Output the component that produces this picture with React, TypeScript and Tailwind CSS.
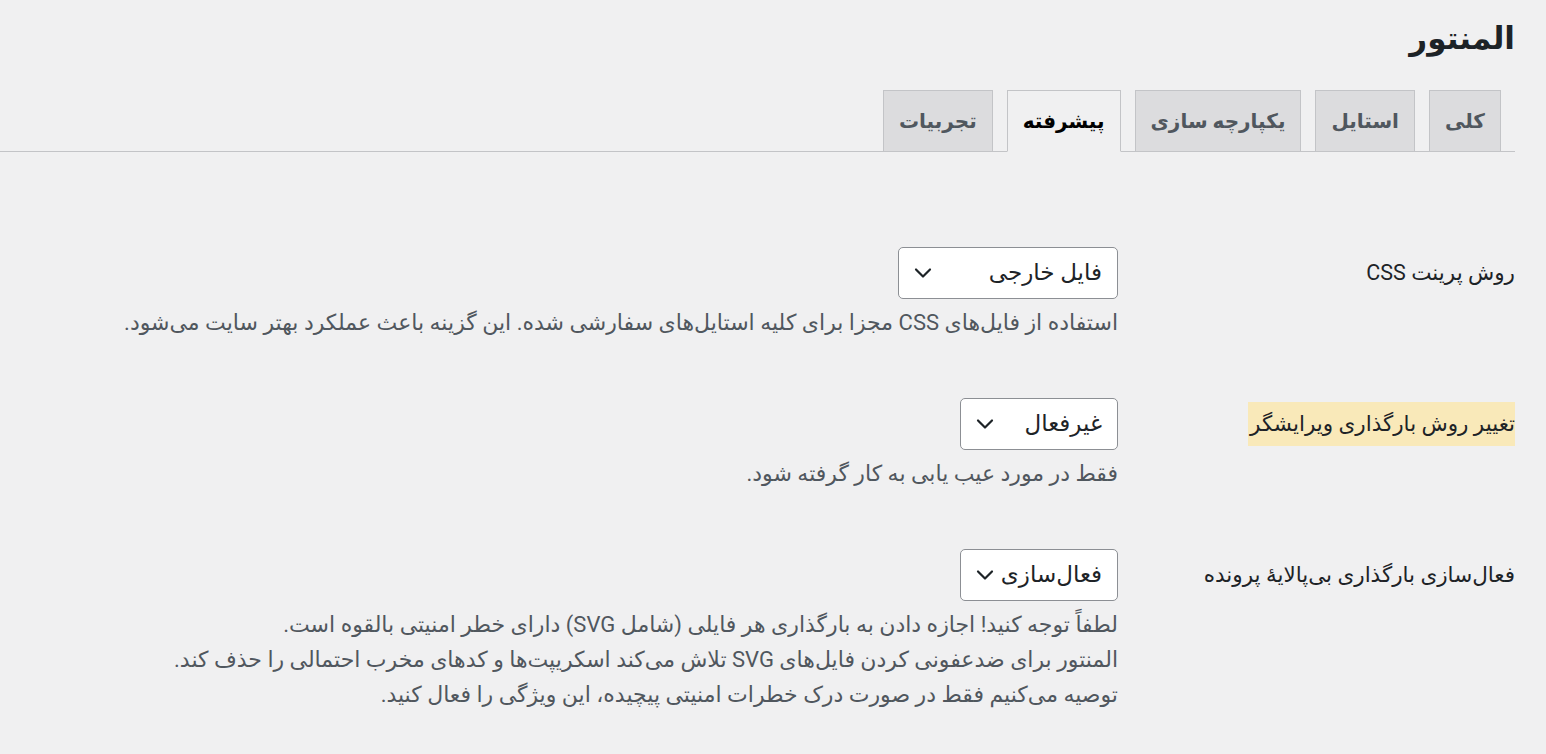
import React from "react";

// tabs, right to left
const tabs = [
  { id: "general", title: "کلی" },
  { id: "style", title: "استایل" },
  { id: "integrations", title: "یکپارچه سازی" },
  { id: "advanced", title: "پیشرفته", active: true },
  { id: "experiments", title: "تجربیات" },
];

const ChevronDown = () => (
  <svg width="20" height="20" viewBox="0 0 20 20" fill="none" className="shrink-0">
    <path d="M3 6.5l7 7 7-7" stroke="#1d2327" strokeWidth="2.2" strokeLinecap="round" strokeLinejoin="round" />
  </svg>
);

const FakeSelect = ({ value, width }: { value: string; width: string }) => (
  <div
    className={`flex items-center justify-between h-[52px] bg-white border border-[#8c8f94] rounded-[5px] pr-[15px] pl-[14px] ${width}`}
  >
    <span className="text-[23px] text-[#1d2327]">{value}</span>
    <ChevronDown />
  </div>
);

const SettingRow = ({ label, highlight, children }: any) => (
  <div className="flex items-start">
    <div className="w-[397px] shrink-0 pt-[4px]">
      <span
        className={`inline-block text-[21.5px] leading-[44px] text-[#1d2327] ${
          highlight ? "bg-[#f9e9b9] pl-[2px]" : ""
        }`}
      >
        {label}
      </span>
    </div>
    <div className="flex flex-col">{children}</div>
  </div>
);

const Description = ({ children }: any) => (
  <p className="text-[22px] leading-[35px] text-[#50575e] mt-[6px]">{children}</p>
);

export default function App() {
  return (
    <div
      dir="rtl"
      className="min-h-screen bg-[#f0f0f1] pr-[31px]"
      style={{ fontFamily: 'Roboto, "DejaVu Sans", sans-serif' }}
    >
      <h1 className="pt-[14px] text-[31px] leading-[50px] font-bold text-[#1d2327]">المنتور</h1>

      {/* Tabs */}
      <div className="mt-[26px] flex items-end gap-[14px] pr-[14px] border-b border-[#c3c4c7]">
        {tabs.map((tab) => (
          <div
            key={tab.id}
            className={`h-[62px] -mb-px flex items-center px-[15px] border border-[#c3c4c7] text-[20px] font-semibold ${
              tab.active
                ? "bg-[#f0f0f1] border-b-[#f0f0f1] text-black"
                : "bg-[#dcdcde] text-[#50575e]"
            }`}
          >
            {tab.title}
          </div>
        ))}
      </div>

      {/* Settings */}
      <div className="pt-[95px] flex flex-col gap-[58px]">
        <SettingRow label="روش پرینت CSS">
          <FakeSelect value="فایل خارجی" width="w-[220px]" />
          <Description>
            استفاده از فایل‌های CSS مجزا برای کلیه استایل‌های سفارشی شده. این گزینه باعث عملکرد بهتر سایت می‌شود.
          </Description>
        </SettingRow>

        <SettingRow label="تغییر روش بارگذاری ویرایشگر" highlight>
          <FakeSelect value="غیرفعال" width="w-[158px]" />
          <Description>فقط در مورد عیب یابی به کار گرفته شود.</Description>
        </SettingRow>

        <SettingRow label="فعال‌سازی بارگذاری بی‌پالایهٔ پرونده">
          <FakeSelect value="فعال‌سازی" width="w-[158px]" />
          <Description>
            لطفاً توجه کنید! اجازه دادن به بارگذاری هر فایلی (شامل SVG) دارای خطر امنیتی بالقوه است.
            <br />
            المنتور برای ضدعفونی کردن فایل‌های SVG تلاش می‌کند اسکریپت‌ها و کدهای مخرب احتمالی را حذف کند.
            <br />
            توصیه می‌کنیم فقط در صورت درک خطرات امنیتی پیچیده، این ویژگی را فعال کنید.
          </Description>
        </SettingRow>
      </div>
    </div>
  );
}
